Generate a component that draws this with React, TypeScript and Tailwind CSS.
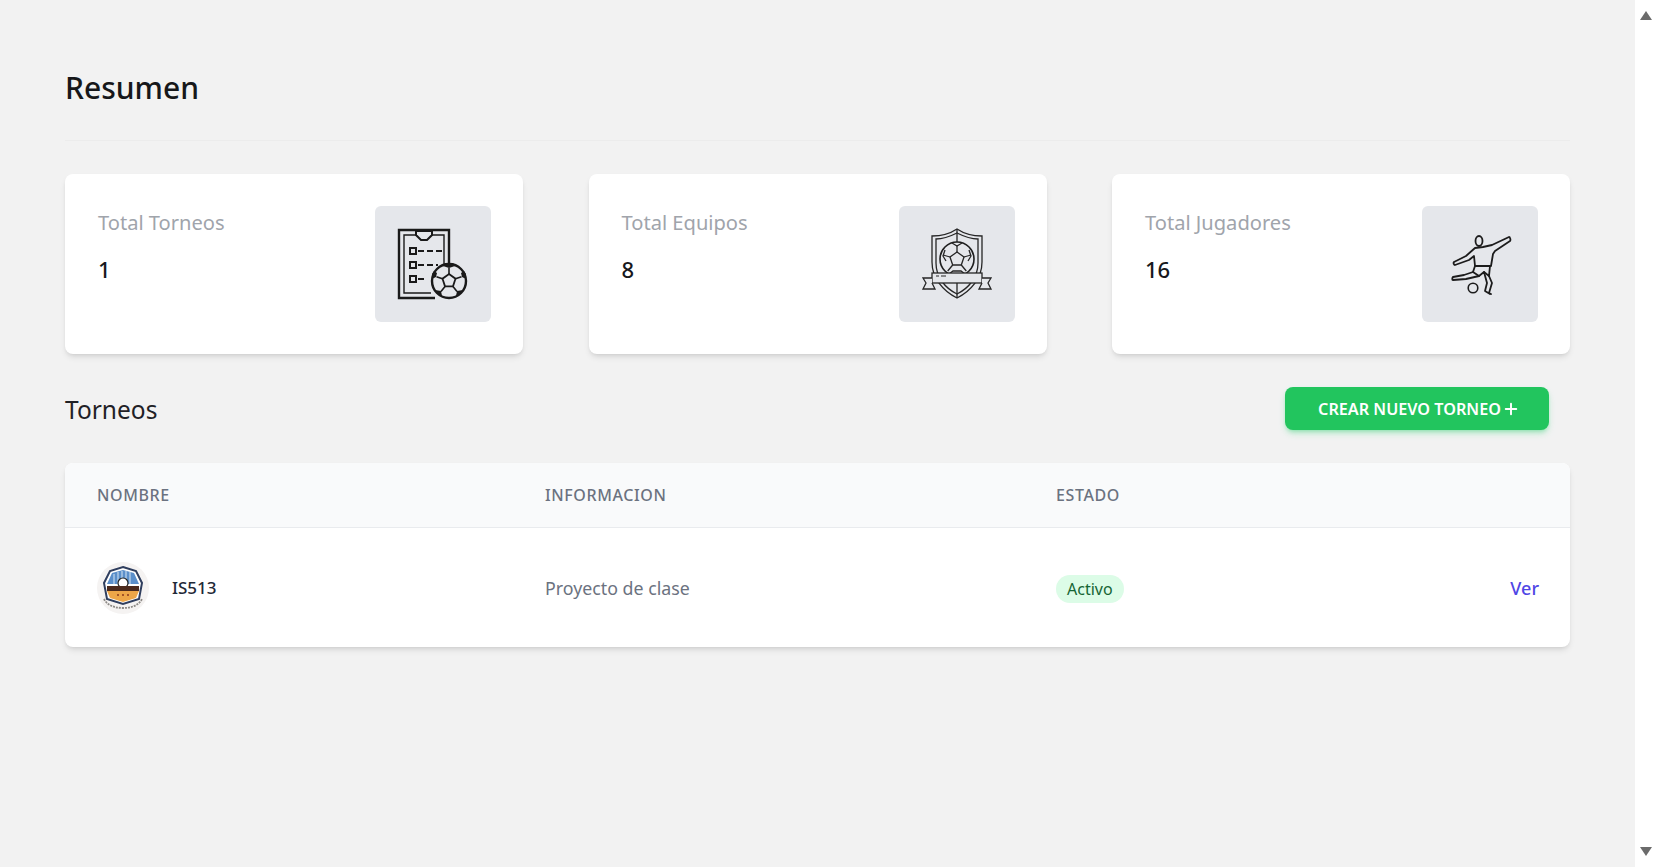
import { Plus } from 'lucide-react'

const font = { fontFamily: '"Noto Sans", "Open Sans", sans-serif' }

function ClipboardIcon() {
  return (
    <svg width="72" height="72" viewBox="0 0 72 72" fill="none" stroke="#1a1a1a" strokeWidth="2">
      <path d="M52 40V2H2v68h36" strokeWidth="2.400" />
      <path d="M47 36V7H7v58h27" strokeWidth="1.400" />
      <path d="M19 3h16v4l-5 5h-6l-5-5z" fill="#e5e7eb" />
      <rect x="13" y="20" width="6" height="6" />
      <rect x="13" y="34" width="6" height="6" />
      <rect x="13" y="48" width="6" height="6" />
      <path d="M21 23h6M30 23h6M39 23h6M21 37h6M30 37h6M39 37h2M21 51h6" />
      <circle cx="52" cy="53" r="17" fill="#e5e7eb" strokeWidth="2.400" />
      <path d="M52 46l6.500 4.700-2.500 7.700h-8l-2.500-7.700z" strokeWidth="1.800" />
      <path d="M52 46v-6M58.500 50.700l6-2M56 58.400l4 5M48 58.400l-4 5M45.500 50.700l-6-2" strokeWidth="1.600" />
      <path d="M46 38l6 2 6-2-2-3h-8zM64 45l1 4 4 2v-5l-2-3zM40 45l-1 4-4 2v-5l2-3zM60 63l6-1-3 4-4 2zM44 63l-6-1 3 4 4 2z" fill="#1a1a1a" stroke="none" />
    </svg>
  )
}

function ShieldIcon() {
  return (
    <svg width="72" height="72" viewBox="0 0 72 72" fill="none" stroke="#262626" strokeWidth="1.300">
      <path d="M36 1c6 4 14 7 25 7v26c0 16-11 29-25 36C22 63 11 50 11 34V8c11 0 19-3 25-7z" />
      <path d="M36 5c6 3 13 6 21 6v24c0 14-9 25-21 31-12-6-21-17-21-31V11c8 0 15-3 21-6z" />
      <path d="M36 1v13M36 55v15" />
      <circle cx="36" cy="31" r="17" fill="#e5e7eb" stroke="#1f1f1f" strokeWidth="1.600" />
      <path d="M36 24l7 5-2.700 8h-8.600L29 29z" />
      <path d="M36 24v-7M43 29l7-2M40.300 37l5 6M31.700 37l-5 6M29 29l-7-2" />
      <path d="M31 15l5 3 5-3M48 22l2 6-3 5M24 22l-2 6 3 5M28 46l4-3h8l4 3" />
      <rect x="11" y="45" width="50" height="10" fill="#e5e7eb" />
      <path d="M15 48h3M20 48h5" strokeWidth="1" />
      <path d="M11 50H2l3 5-3 6h12l-3-6M61 50h9l-3 5 3 6H58l3-6" fill="#e5e7eb" />
    </svg>
  )
}

function PlayerIcon() {
  return (
    <svg width="72" height="72" viewBox="0 0 72 72" fill="none" stroke="#1c1c1c" strokeWidth="1.800" strokeLinejoin="round" strokeLinecap="round">
      <ellipse cx="35" cy="13" rx="3.500" ry="5" />
      <path d="M31 20l-9 8-12 6c-1 1 0 3 1 3l14-5 5-4 1 10h16l2-12 2-3 15-10c1-1 0-4-1-4l-17 8-9 2z" />
      <path d="M31 38l-2 6 6 4 5-4 5 4 1-10" />
      <path d="M29 44l-9 3-11 2c-1 1-1 3 0 3l13-1 13-3" />
      <path d="M40 44l3 11-2 8 5 3M45 48l3 7-3 10 2 1" />
      <circle cx="29" cy="60" r="4.800" strokeWidth="1.600" />
    </svg>
  )
}

function LogoBadge() {
  return (
    <svg width="52" height="52" viewBox="0 0 52 52" fill="none">
      <circle cx="26" cy="26" r="26" fill="#f5f3f2" />
      <path d="M26 5l13 4 6 12-3 16-16 5-16-5-3-16 6-12z" fill="#fff" stroke="#2f3e5e" strokeWidth="2" />
      <path d="M26 8l11 3 5 11H10l5-11z" fill="#5b8fca" />
      <path d="M17 12v10M21 10v12M25 9v13M29 9v13M33 10v12" stroke="#d8e6f4" strokeWidth="1" />
      <circle cx="26" cy="21" r="5" fill="#fff" stroke="#222" strokeWidth="1.200" />
      <path d="M10 24h32v5H10z" fill="#4b2a1d" />
      <path d="M10 29h32l-3 7-13 4-13-4z" fill="#eda648" />
      <path d="M20 33h2M25 33h2M30 33h2" stroke="#8a3a1c" strokeWidth="1.500" />
      <path d="M7 37c3 6 10 9 19 9s16-3 19-9" stroke="#8d8a86" strokeWidth="1.800" strokeDasharray="2 1" />
    </svg>
  )
}

const stats = [
  { label: 'Total Torneos', value: '1', icon: <ClipboardIcon /> },
  { label: 'Total Equipos', value: '8', icon: <ShieldIcon /> },
  { label: 'Total Jugadores', value: '16', icon: <PlayerIcon /> },
]

export default function App() {
  return (
    <div className="flex h-screen overflow-hidden bg-[#f2f2f2]" style={font}>
      <main className="flex-1 px-[65px] pt-[62px]">
        <h1 className="text-[30px] leading-[52px] font-medium text-[#16171a]">Resumen</h1>
        <div className="mt-[26px] border-t border-[#ececec]" />

        <div className="mt-[33px] grid grid-cols-3 gap-[65.500px]">
          {stats.map((stat) => (
            <div key={stat.label} className="flex h-[180px] justify-between rounded-lg bg-white p-8 shadow-md">
              <div className="pt-[3px] pl-px">
                <p className="text-[20.100px] leading-7 text-[#a0a4ab]">{stat.label}</p>
                <p className="mt-[18px] text-[22px] leading-7 font-medium text-[#17181c]">{stat.value}</p>
              </div>
              <div className="flex size-[116px] items-center justify-center rounded-md bg-[#e5e7eb]">
                {stat.icon}
              </div>
            </div>
          ))}
        </div>

        <div className="mt-[33px] flex items-center justify-between pr-[21px]">
          <h2 className="pt-[3px] text-[24.500px] text-[#1f2126]">Torneos</h2>
          <button className="flex h-[43px] w-[264px] items-center justify-center gap-px rounded-lg bg-[#22c55e] pt-px pl-1 text-[16.200px] font-semibold text-white shadow-md shadow-green-500/30">
            CREAR NUEVO TORNEO
            <Plus size={18} strokeWidth={2.600} />
          </button>
        </div>

        <div className="mt-[33px] overflow-hidden rounded-lg bg-white shadow-md">
          <div className="grid h-[65px] grid-cols-[448px_511px_1fr] items-center border-b border-[#e9ebee] bg-[#f9fafb] px-8 text-[16px] font-medium tracking-[0.6px] text-[#6b7280]">
            <span>NOMBRE</span>
            <span>INFORMACION</span>
            <span>ESTADO</span>
          </div>
          <div className="grid h-[119px] grid-cols-[448px_511px_1fr] items-center pr-[31px] pl-8">
            <div className="flex items-center gap-[23px]">
              <LogoBadge />
              <span className="pt-px text-[17px] font-medium text-[#1f2937]">IS513</span>
            </div>
            <span className="pt-px text-[17.800px] text-[#6b7280]">Proyecto de clase</span>
            <div className="flex items-center justify-between">
              <span className="mt-0.5 rounded-full bg-[#dcfce7] px-[11px] text-base leading-7 text-[#166534]">Activo</span>
              <a className="pt-px text-[18px] font-medium text-[#4f46e5]">Ver</a>
            </div>
          </div>
        </div>
      </main>

      <div className="flex w-[21px] flex-col items-center justify-between bg-white py-[11px]">
        <div className="h-0 w-0 border-x-[6px] border-b-[9px] border-x-transparent border-b-[#6b6b6b]" />
        <div className="h-0 w-0 border-x-[6px] border-t-[9px] border-x-transparent border-t-[#6b6b6b]" />
      </div>
    </div>
  )
}
